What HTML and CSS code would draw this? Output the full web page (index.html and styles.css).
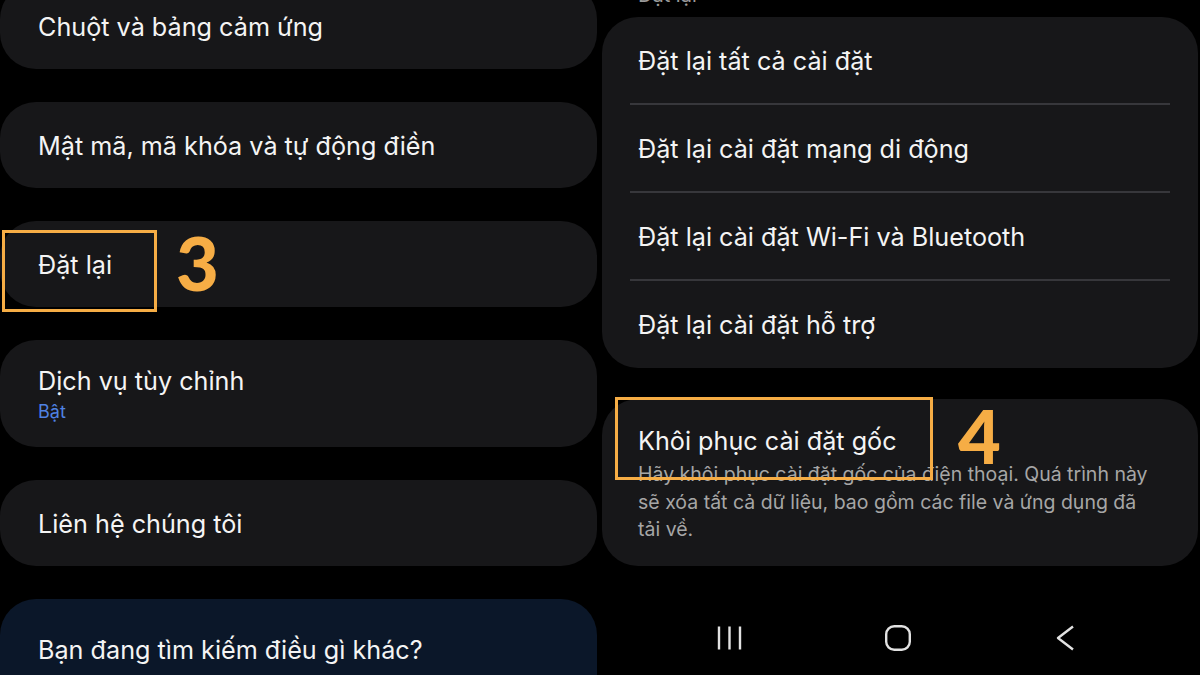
FILE: index.html
```html
<!DOCTYPE html>
<html lang="vi">
<head>
  <meta charset="UTF-8">
  <meta name="viewport" content="width=device-width, initial-scale=1.0">
  <title>Đặt lại</title>
  <link rel="stylesheet" href="styles.css">
</head>
<body>
  <div class="screen">
    <!-- Màn hình trái: Quản lý chung -->
    <section class="panel panel-left">
      <div class="card card-single">
        <span class="title">Chuột và bảng cảm ứng</span>
      </div>
      <div class="card card-single">
        <span class="title">Mật mã, mã khóa và tự động điền</span>
      </div>
      <div class="card card-single card-marked">
        <span class="title">Đặt lại</span>
        <span class="mark-box mark-box-3"></span>
        <span class="mark-num mark-num-3">3</span>
      </div>
      <div class="card card-double">
        <span class="title">Dịch vụ tùy chỉnh</span>
        <span class="sub">Bật</span>
      </div>
      <div class="card card-single">
        <span class="title">Liên hệ chúng tôi</span>
      </div>
      <div class="card card-search">
        <span class="title">Bạn đang tìm kiếm điều gì khác?</span>
      </div>
    </section>

    <!-- Màn hình phải: Đặt lại -->
    <section class="panel panel-right">
      <div class="section-label">Đặt lại</div>
      <div class="card card-group">
        <div class="row"><span class="title">Đặt lại tất cả cài đặt</span></div>
        <div class="divider"></div>
        <div class="row"><span class="title">Đặt lại cài đặt mạng di động</span></div>
        <div class="divider"></div>
        <div class="row"><span class="title">Đặt lại cài đặt Wi-Fi và Bluetooth</span></div>
        <div class="divider"></div>
        <div class="row"><span class="title">Đặt lại cài đặt hỗ trợ</span></div>
      </div>
      <div class="card card-reset card-marked">
        <span class="title">Khôi phục cài đặt gốc</span>
        <p class="desc">Hãy khôi phục cài đặt gốc của điện thoại. Quá trình này sẽ xóa tất cả dữ liệu, bao gồm các file và ứng dụng đã tải về.</p>
        <span class="mark-box mark-box-4"></span>
        <span class="mark-num mark-num-4">4</span>
      </div>

      <nav class="navbar">
        <svg class="nav-icon" width="26" height="26" viewBox="0 0 26 26">
          <path d="M2 1.5v23M12.5 1.5v23M23 1.5v23" stroke="#e2e2e2" stroke-width="2.4" fill="none"/>
        </svg>
        <svg class="nav-icon" width="26" height="26" viewBox="0 0 26 26">
          <rect x="1.2" y="1.2" width="23.6" height="23.6" rx="8" stroke="#e2e2e2" stroke-width="2.4" fill="none"/>
        </svg>
        <svg class="nav-icon" width="26" height="26" viewBox="0 0 26 26">
          <path d="M20 1.5L5 13l15 11.5" stroke="#e2e2e2" stroke-width="2.4" fill="none" stroke-linejoin="round"/>
        </svg>
      </nav>
    </section>
  </div>
</body>
</html>
```

FILE: styles.css
```css
* {
  box-sizing: border-box;
}

html,
body {
  margin: 0;
  padding: 0;
  background-color: #000;
}

body {
  font-family: Inter, Roboto, "Noto Sans", Arial, sans-serif;
  color: #f2f2f2;
  width: 1200px;
  height: 675px;
  overflow: hidden;
}

.screen {
  display: flex;
  height: 675px;
}

.panel {
  width: 600px;
  display: flex;
  flex-direction: column;
}

/* ---- khung bên trái ---- */
.panel-left {
  gap: 33px;
  margin-top: -17px;
  padding-right: 3px;
}

.card {
  position: relative;
  background-color: #171719;
  border-radius: 36px;
  flex-shrink: 0;
}

.title {
  font-size: 25.2px;
  line-height: 30px;
  color: #f4f4f4;
}

.card-single {
  height: 86px;
  display: flex;
  align-items: center;
  padding: 2px 38px 0;
}

.card-double {
  height: 107px;
  display: flex;
  flex-direction: column;
  padding: 26px 38px 0;
}

.sub {
  font-size: 18px;
  line-height: 22px;
  margin-top: 5px;
  color: #4f82e3;
}

.card-search {
  height: 120px;
  padding: 36px 38px 0;
  background-color: #0b1729;
}

/* ---- khung bên phải ---- */
.panel-right {
  padding: 0 2px;
}

.section-label {
  font-size: 20px;
  line-height: 20px;
  color: #9a9a9a;
  padding-left: 36px;
  margin-top: -15px;
  margin-bottom: 12px;
}

.card-group {
  padding: 0;
}

.row {
  height: 87px;
  display: flex;
  align-items: center;
  padding: 0 36px;
}

.divider {
  height: 2px;
  margin: 0 28px;
  background-color: #37373b;
  margin-top: -1px;
}

.card-reset {
  margin-top: 31px;
  padding: 27px 36px 22px;
  display: flex;
  flex-direction: column;
}

.desc {
  margin: 5px 0 0;
  max-width: 520px;
  font-size: 19.5px;
  line-height: 27.5px;
  color: #a6a6a6;
}

.navbar {
  display: flex;
  justify-content: center;
  gap: 142px;
  margin-top: 59px;
  margin-left: -4px;
}

.nav-icon {
  display: block;
}

/* ---- đánh dấu bước ---- */
.mark-box {
  position: absolute;
  border: 3px solid #f6ad45;
}

.mark-num {
  position: absolute;
  font-family: Lato, "Open Sans", sans-serif;
  font-weight: 900;
  color: #f6ad45;
  font-size: 74px;
  line-height: 74px;
}

.mark-box-3 {
  left: 2px;
  top: 9px;
  width: 155px;
  height: 82px;
}

.mark-num-3 {
  left: 176px;
  top: 5px;
}

.mark-box-4 {
  left: 13px;
  top: -2px;
  width: 318px;
  height: 83px;
}

.mark-num-4 {
  left: 356px;
  top: 0;
}
```
